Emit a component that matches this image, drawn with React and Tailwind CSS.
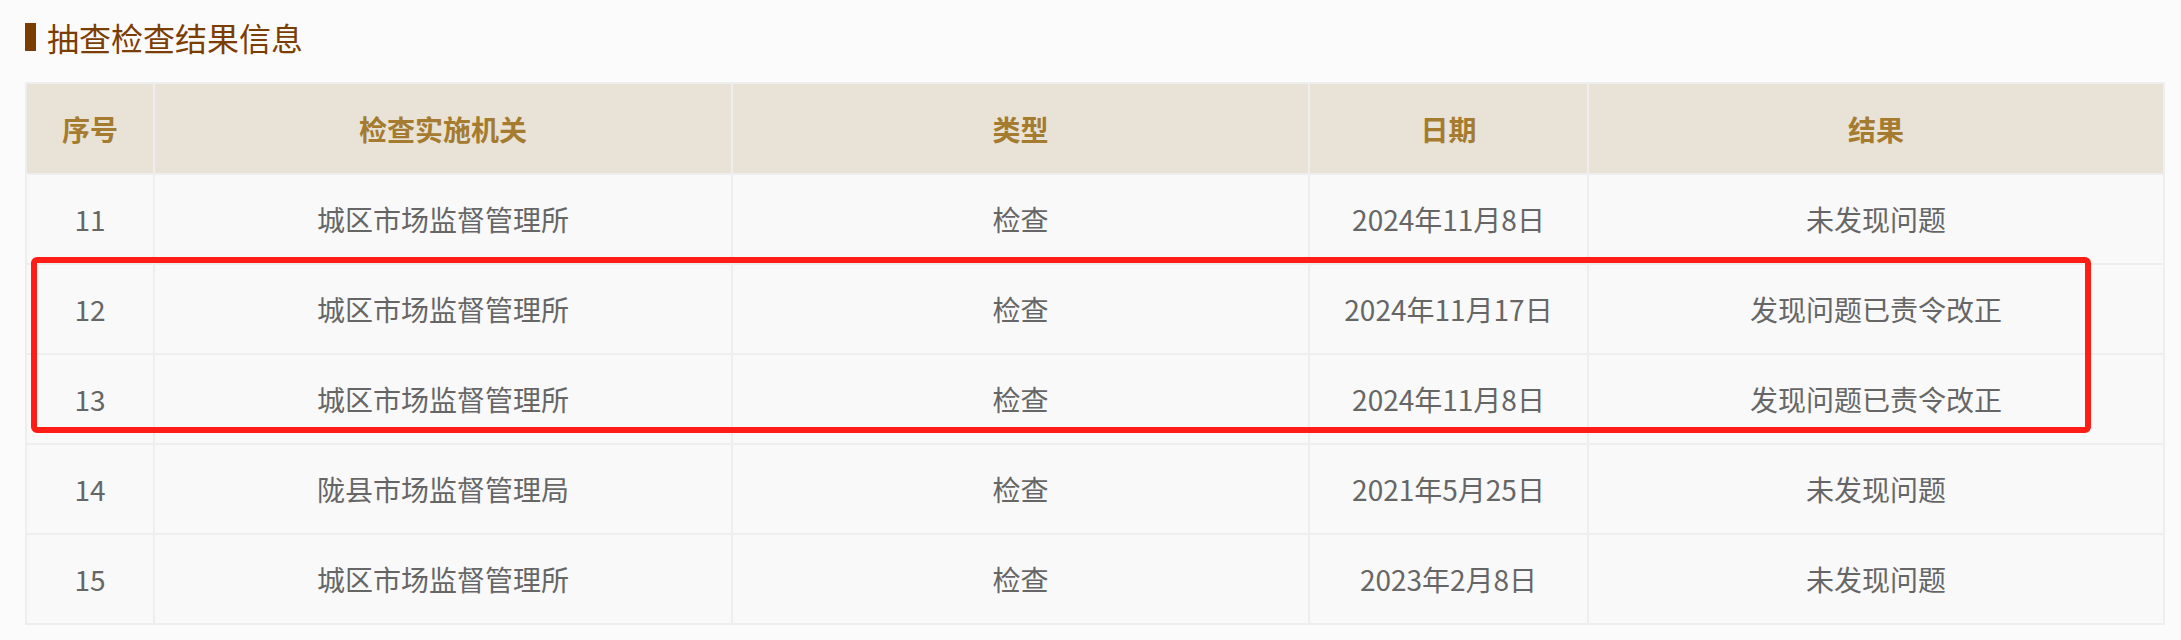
import React from "react";

const rows = [
  ["11", "城区市场监督管理所", "检查", "2024年11月8日", "未发现问题"],
  ["12", "城区市场监督管理所", "检查", "2024年11月17日", "发现问题已责令改正"],
  ["13", "城区市场监督管理所", "检查", "2024年11月8日", "发现问题已责令改正"],
  ["14", "陇县市场监督管理局", "检查", "2021年5月25日", "未发现问题"],
  ["15", "城区市场监督管理所", "检查", "2023年2月8日", "未发现问题"],
];

const headers = ["序号", "检查实施机关", "类型", "日期", "结果"];

export default function App() {
  return (
    <div
      className="w-full h-[640px] bg-[#fbfbfb] pl-[25px] pt-[23px]"
      style={{ fontFamily: '"Noto Sans CJK SC", "Noto Sans", sans-serif' }}
    >
      <div className="flex items-center h-[28px] gap-[11px]">
        <div className="w-[11px] h-[28px] bg-[#7c3d02]" />
        <div className="text-[32px] leading-[28px] text-[#7c3d02]">抽查检查结果信息</div>
      </div>
      <div className="relative mt-[31px] w-[2140px]">
        <div className="grid grid-cols-[126px_576px_575px_277px_574px] gap-[2px] p-[2px] bg-[#eeeeee]">
          {headers.map((h) => (
            <div
              key={h}
              className="h-[89px] bg-[#e9e2d7] flex items-center justify-center text-[28px] font-bold text-[#a57b2f]"
            >
              {h}
            </div>
          ))}
          {rows.map((r, i) =>
            r.map((c, j) => (
              <div
                key={i + "-" + j}
                className="h-[88px] bg-[#f9f9f9] flex items-center justify-center text-[28px] text-[#666666]"
              >
                {c}
              </div>
            ))
          )}
        </div>
        <div className="absolute left-[6px] top-[175px] w-[2060px] h-[176px] border-[6px] border-[#ff1d16] rounded-[6px] pointer-events-none" />
      </div>
    </div>
  );
}
